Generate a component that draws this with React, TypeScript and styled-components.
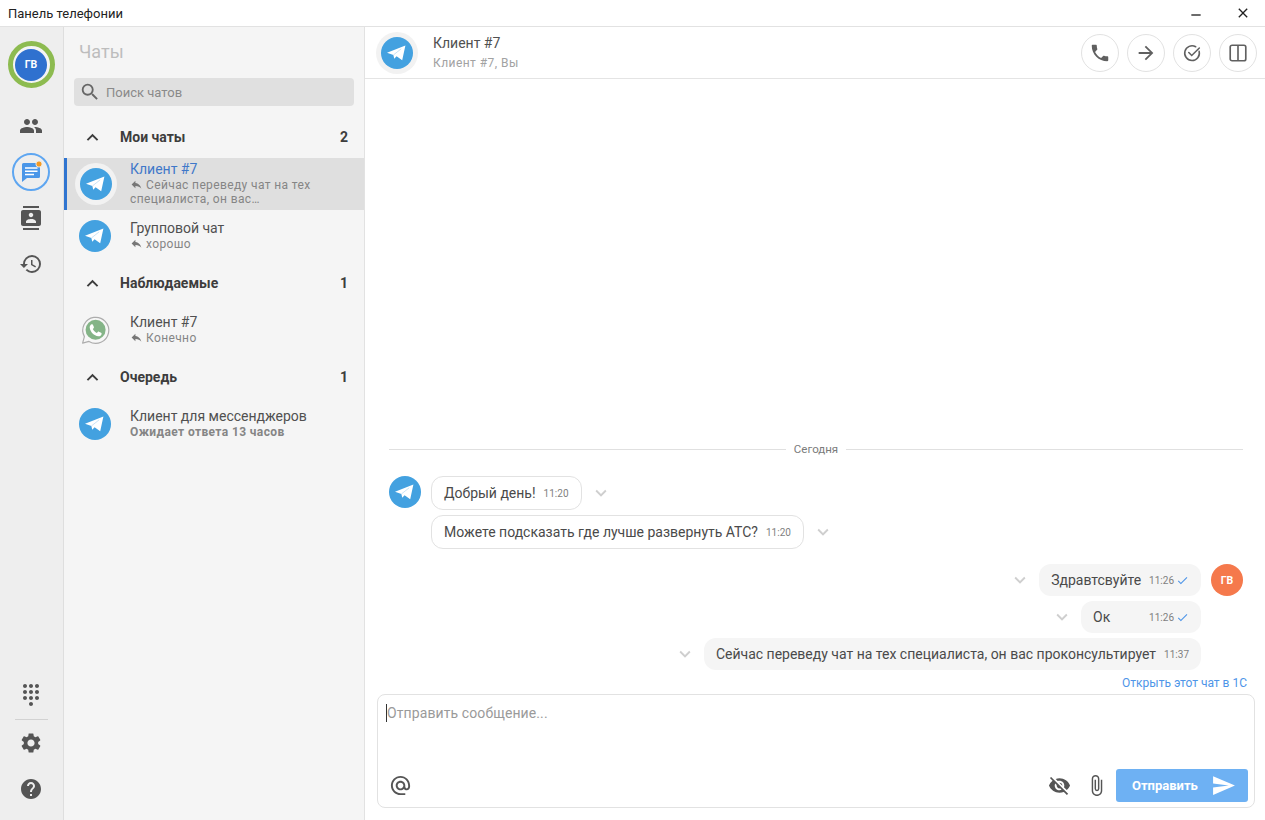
import React from "react";
import styled, { createGlobalStyle } from "styled-components";
import {
  MdPeople, MdContacts, MdRestore, MdDialpad, MdSettings, MdHelp, MdSearch, MdReply,
  MdExpandLess, MdPhone, MdArrowForward, MdVisibilityOff, MdAttachFile, MdSend,
  MdAlternateEmail, MdKeyboardArrowDown, MdCheck, MdClose, MdRemove,
} from "react-icons/md";

const Global = createGlobalStyle`
  html, body { margin: 0; padding: 0; height: 100%; background: #fff; overflow: hidden; }
  body { font-family: Roboto, "Liberation Sans", sans-serif; color: #333; }
  #root { height: 100%; }
`;

const Window = styled.div`
  width: 1265px; height: 820px; display: flex; flex-direction: column; overflow: hidden;
`;
const TitleBar = styled.header`
  height: 26px; flex: none; display: flex; align-items: center; justify-content: space-between;
  border-bottom: 1px solid #e2e2e2; padding: 0 14px 0 8px; font-size: 13px; color: #222;
`;
const WinButtons = styled.div`
  display: flex; align-items: center; gap: 31px; color: #222;
  svg { display: block; width: 16px; height: 16px; }
  svg:first-child { margin-top: 3px; }
`;
const Body = styled.div` flex: 1; display: flex; min-height: 0; `;
const Rail = styled.nav`
  width: 62px; flex: none; background: #eeeeee; border-right: 1px solid #dedede; padding-right: 1px;
  display: flex; flex-direction: column; align-items: center; padding-top: 14px; color: #555;
`;
const ProfileRing = styled.div`
  width: 47px; height: 47px; box-sizing: border-box; border-radius: 50%; border: 5px solid #8dbb50;
  background: #f4f4f4; display: flex; align-items: center; justify-content: center; margin-bottom: 19px; flex: none;
`;
const Initials = styled.div<{ $bg: string }>`
  width: 32px; height: 32px; border-radius: 50%; background: ${(p) => p.$bg}; color: #fff;
  font-size: 10.5px; font-weight: 700; display: flex; align-items: center; justify-content: center; flex: none;
`;
const RailItem = styled.div<{ $h: number }>`
  width: 38px; height: ${(p) => p.$h}px; display: flex; align-items: center; justify-content: center; flex: none;
  svg { display: block; width: 24px; height: 24px; }
`;
const ActiveCircle = styled.div`
  width: 38px; height: 38px; box-sizing: border-box; border: 2px solid #5ea6f1; border-radius: 50%;
  display: flex; align-items: center; justify-content: center; margin: 8px 0 4px; flex: none;
`;
const RailSpacer = styled.div` flex: 1; `;
const RailRule = styled.hr`
  width: 33px; border: 0; border-top: 1px solid #d2d2d2; margin: 0; flex: none;
`;
const ChatsPanel = styled.aside`
  width: 300px; flex: none; background: #f5f5f5; border-right: 1px solid #e2e2e2;
  display: flex; flex-direction: column;
`;
const PanelTitle = styled.h1`
  margin: 0; height: 51px; box-sizing: border-box; padding: 14px 0 0 15px;
  font-size: 18px; line-height: 21px; font-weight: 400; color: #bdbdbd;
`;
const Search = styled.div`
  height: 28px; margin: 0 10px; background: #e0e0e0; border-radius: 4px; display: flex; align-items: center;
  padding-left: 5px; gap: 5px; color: #8a8a8a; font-size: 13px; flex: none;
  svg { width: 22px; height: 22px; color: #666; display: block; }
`;
const Section = styled.div`
  height: 42px; flex: none; display: flex; align-items: center; padding: 0 16px 0 17px;
  font-size: 14px; font-weight: 700; color: #3d3d3d;
  svg { width: 23px; height: 23px; display: block; }
`;
const SectionName = styled.span` flex: 1; margin-left: 16px; `;
const SectionStart = styled.div` margin-top: 10px; `;
const Row = styled.div<{ $active?: boolean }>`
  height: 52px; flex: none; box-sizing: border-box; display: flex; align-items: center;
  padding-left: ${(p) => (p.$active ? 8 : 15)}px; gap: ${(p) => (p.$active ? 13 : 19)}px;
  background: ${(p) => (p.$active ? "#dfdfdf" : "transparent")};
  border-left: ${(p) => (p.$active ? "3px solid #2f74d0" : "0")};
`;
const RowText = styled.div` flex: 1; min-width: 0; padding: 0 30px 1px 0; `;
const RowName = styled.div<{ $active?: boolean }>`
  font-size: 14px; line-height: 16px; color: ${(p) => (p.$active ? "#3f78c9" : "#505050")};
`;
const RowLine = styled.div<{ $bold?: boolean }>`
  font-size: 12px; line-height: 14px; margin-top: 1px; letter-spacing: 0.38px;
  font-weight: ${(p) => (p.$bold ? 700 : 400)}; color: #858585;
  svg { width: 13px; height: 13px; vertical-align: -2px; margin-right: 3px; color: #777; }
`;
const Halo = styled.div`
  width: 42px; height: 42px; border-radius: 50%; background: #f2f2f2; flex: none;
  display: flex; align-items: center; justify-content: center;
`;
const IconDisc = styled.svg`
  width: 32px; height: 32px; display: block; flex: none;
`;
const Main = styled.main` flex: 1; min-width: 0; display: flex; flex-direction: column; background: #fff; `;
const ChatHeader = styled.div`
  height: 52px; flex: none; box-sizing: border-box; border-bottom: 1px solid #e4e4e4;
  display: flex; align-items: center; padding: 0 8px 0 11px;
`;
const HeaderText = styled.div` flex: 1; margin-left: 15px; `;
const HeaderName = styled.div` font-size: 14px; line-height: 17px; color: #505050; `;
const HeaderSub = styled.div` font-size: 12px; line-height: 15px; margin-top: 4px; color: #a2a2a2; letter-spacing: 0.45px; `;
const HeaderButtons = styled.div` display: flex; gap: 8px; `;
const RoundButton = styled.button`
  width: 38px; height: 38px; padding: 0; border-radius: 50%; border: 1px solid #e2e2e2; background: #fff;
  color: #606060; display: flex; align-items: center; justify-content: center;
  svg { width: 22px; height: 22px; display: block; }
`;
const Messages = styled.div`
  flex: 1; min-height: 0; display: flex; flex-direction: column; justify-content: flex-end; padding: 0 22px 0 24px;
`;
const DateLine = styled.div`
  display: flex; align-items: center; gap: 8px; font-size: 11.5px; color: #7b7b7b; margin-bottom: 20px;
  &::before, &::after { content: ""; flex: 1; border-top: 1px solid #e0e0e0; }
`;
const MsgRow = styled.div<{ $out?: boolean; $gap?: number }>`
  display: flex; align-items: center; justify-content: ${(p) => (p.$out ? "flex-end" : "flex-start")};
  margin-top: ${(p) => p.$gap ?? 0}px;
  padding-left: ${(p) => (p.$out ? 0 : 42)}px; padding-right: ${(p) => (p.$out ? 42 : 0)}px;
  position: relative;
`;
const MsgAvatar = styled.div<{ $out?: boolean }>`
  position: absolute; top: 0; ${(p) => (p.$out ? "right: 0;" : "left: 0;")}
`;
const Bubble = styled.div<{ $out?: boolean; $h?: number; $w?: number }>`
  box-sizing: border-box; height: ${(p) => p.$h ?? 32}px; ${(p) => (p.$w ? `width: ${p.$w}px;` : "")}
  display: flex; align-items: center; justify-content: space-between; gap: 8px; padding: 0 12px;
  border-radius: 12px; font-size: 14px; color: #4a4a4a;
  background: ${(p) => (p.$out ? "#f5f5f5" : "#fff")};
  border: ${(p) => (p.$out ? "0" : "1px solid #e2e2e2")};
`;
const Time = styled.span`
  font-size: 10px; color: #7f7f7f; white-space: nowrap; display: inline-flex; align-items: center; gap: 2px; margin-top: 1px;
  svg { width: 13px; height: 13px; color: #4e95e8; display: block; }
`;
const Caret = styled.span`
  color: #cfcfcf; display: flex; margin: 0 8px;
  svg { width: 22px; height: 22px; display: block; }
`;
const OpenLink = styled.a`
  align-self: flex-end; font-size: 12px; line-height: 14px; color: #4e95e8; margin: 6px -4px 4px 0;
`;
const Composer = styled.div`
  height: 114px; flex: none; box-sizing: border-box; margin: 0 10px 12px 12px; border: 1px solid #e2e2e2; border-radius: 8px;
  display: flex; flex-direction: column; justify-content: space-between; padding: 9px 6px 5px 8px;
`;
const Placeholder = styled.div`
  font-size: 14px; line-height: 18px; color: #9a9a9a; border-left: 1px solid #333;
  width: max-content; letter-spacing: 0.1px;
`;
const ComposerBar = styled.div` display: flex; align-items: center; color: #555; `;
const ComposerIcon = styled.span<{ $ml?: number; $mr?: number }>`
  display: flex; margin-left: ${(p) => p.$ml ?? 0}px; margin-right: ${(p) => p.$mr ?? 0}px;
  svg { width: 23px; height: 23px; display: block; }
`;
const Grow = styled.div` flex: 1; `;
const SendButton = styled.button`
  width: 132px; height: 33px; border: 0; border-radius: 3px; background: #6eb1f3; color: #fff; padding: 0 16px;
  display: flex; align-items: center; justify-content: space-between; font: 700 13px Roboto, sans-serif;
  svg { width: 25px; height: 25px; display: block; margin-right: -4px; }
`;

const Tg = () => (
  <IconDisc viewBox="0 0 32 32">
    <circle cx="16" cy="16" r="16" fill="#43a1e0" />
    <path d="M6 15.8 L24.4 8.4 L21.2 23.2 L15.6 19.2 L13.2 21.8 L12.4 18 Z" fill="#fff" />
    <path d="M12.4 18 L20.2 11.8" stroke="#bcdcf3" strokeWidth="0.8" />
  </IconDisc>
);

const Wa = () => (
  <IconDisc viewBox="0 0 32 32">
    <path d="M3.6 29.2 L5.4 22.6 A13 13 0 1 1 10 27.4 Z" fill="#f7f7f7" stroke="#adadad" strokeWidth="1.2" strokeLinejoin="round" />
    <circle cx="16.6" cy="15.8" r="10" fill="#84b487" />
    <path d="M12.6 10.2c.5 0 1 0 1.3.6l1 2.3c.1.4 0 .8-.3 1.1l-.8.9c.9 1.7 2.2 3 4 3.9l1-1.1c.3-.3.7-.4 1.1-.2l2.2 1c.5.3.6.7.5 1.2-.3 1.6-1.8 2.5-3.3 2.3-4.3-.6-8-4.2-8.6-8.5-.2-1.5.7-3 1.9-3.500z" fill="#fff" />
  </IconDisc>
);

const ChatBubbleIcon = () => (
  <svg width="26" height="26" viewBox="0 0 26 26">
    <path d="M5.5 4h15a1.5 1.5 0 0 1 1.5 1.5v12a1.5 1.5 0 0 1-1.5 1.5H9l-5 4V5.5A1.5 1.5 0 0 1 5.5 4z" fill="#4a96e8" />
    <path d="M7 9h12.5M7 12.2h12.5M7 15.4h9" stroke="#fff" strokeWidth="1.5" />
    <circle cx="21" cy="5" r="3.1" fill="#f59a23" stroke="#eee" strokeWidth="0.9" />
  </svg>
);

const PanelIcon = () => (
  <svg viewBox="0 0 24 24" fill="none" stroke="currentColor" strokeWidth="1.8">
    <rect x="3.5" y="3.5" width="17" height="17" rx="2" />
    <path d="M12 3.5v17" />
  </svg>
);

const CheckCircle = () => (
  <svg viewBox="0 0 24 24" fill="none" stroke="currentColor" strokeWidth="1.7" strokeLinecap="round">
    <path d="M19.8 10.2A8 8 0 1 1 16 5.2" />
    <path d="M8.5 11.5l3.2 3.2L20 6.5" />
  </svg>
);

const Down = () => (
  <Caret><MdKeyboardArrowDown /></Caret>
);

export default function App() {
  return (
    <Window>
      <Global />
      <TitleBar>
        <span>Панель телефонии</span>
        <WinButtons><MdRemove /><MdClose /></WinButtons>
      </TitleBar>
      <Body>
        <Rail>
          <ProfileRing><Initials $bg="#2f71cf">ГВ</Initials></ProfileRing>
          <RailItem $h={38}><MdPeople /></RailItem>
          <ActiveCircle><ChatBubbleIcon /></ActiveCircle>
          <RailItem $h={46}><MdContacts /></RailItem>
          <RailItem $h={46}><MdRestore /></RailItem>
          <RailSpacer />
          <RailItem $h={48}><MdDialpad /></RailItem>
          <RailRule />
          <RailItem $h={46}><MdSettings /></RailItem>
          <RailItem $h={46}><MdHelp /></RailItem>
          <RailItem $h={8} />
        </Rail>
        <ChatsPanel>
          <PanelTitle>Чаты</PanelTitle>
          <Search><MdSearch /> Поиск чатов</Search>
          <SectionStart />
          <Section><MdExpandLess /><SectionName>Мои чаты</SectionName>2</Section>
          <Row $active>
            <Halo><Tg /></Halo>
            <RowText>
              <RowName $active>Клиент #7</RowName>
              <RowLine><MdReply />Сейчас переведу чат на тех специалиста, он вас…</RowLine>
            </RowText>
          </Row>
          <Row>
            <Tg />
            <RowText>
              <RowName>Групповой чат</RowName>
              <RowLine><MdReply />хорошо</RowLine>
            </RowText>
          </Row>
          <Section><MdExpandLess /><SectionName>Наблюдаемые</SectionName>1</Section>
          <Row>
            <Wa />
            <RowText>
              <RowName>Клиент #7</RowName>
              <RowLine><MdReply />Конечно</RowLine>
            </RowText>
          </Row>
          <Section><MdExpandLess /><SectionName>Очередь</SectionName>1</Section>
          <Row>
            <Tg />
            <RowText>
              <RowName>Клиент для мессенджеров</RowName>
              <RowLine $bold>Ожидает ответа 13 часов</RowLine>
            </RowText>
          </Row>
        </ChatsPanel>
        <Main>
          <ChatHeader>
            <Halo><Tg /></Halo>
            <HeaderText>
              <HeaderName>Клиент #7</HeaderName>
              <HeaderSub>Клиент #7, Вы</HeaderSub>
            </HeaderText>
            <HeaderButtons>
              <RoundButton><MdPhone /></RoundButton>
              <RoundButton><MdArrowForward /></RoundButton>
              <RoundButton><CheckCircle /></RoundButton>
              <RoundButton><PanelIcon /></RoundButton>
            </HeaderButtons>
          </ChatHeader>
          <Messages>
            <DateLine>Сегодня</DateLine>
            <MsgRow>
              <MsgAvatar><Tg /></MsgAvatar>
              <Bubble $h={34}>Добрый день! <Time>11:20</Time></Bubble>
              <Down />
            </MsgRow>
            <MsgRow $gap={5}>
              <Bubble $h={34}>Можете подсказать где лучше развернуть АТС? <Time>11:20</Time></Bubble>
              <Down />
            </MsgRow>
            <MsgRow $out $gap={15}>
              <MsgAvatar $out><Initials $bg="#f5794c">ГВ</Initials></MsgAvatar>
              <Down />
              <Bubble $out>Здравтсвуйте <Time>11:26 <MdCheck /></Time></Bubble>
            </MsgRow>
            <MsgRow $out $gap={5}>
              <Down />
              <Bubble $out $w={120}>Ок <Time>11:26 <MdCheck /></Time></Bubble>
            </MsgRow>
            <MsgRow $out $gap={5}>
              <Down />
              <Bubble $out>Сейчас переведу чат на тех специалиста, он вас проконсультирует <Time>11:37</Time></Bubble>
            </MsgRow>
            <OpenLink>Открыть этот чат в 1С</OpenLink>
          </Messages>
          <Composer>
            <Placeholder>Отправить сообщение...</Placeholder>
            <ComposerBar>
              <ComposerIcon $ml={3}><MdAlternateEmail /></ComposerIcon>
              <Grow />
              <ComposerIcon $mr={14}><MdVisibilityOff /></ComposerIcon>
              <ComposerIcon $mr={8}><MdAttachFile /></ComposerIcon>
              <SendButton>Отправить <MdSend /></SendButton>
            </ComposerBar>
          </Composer>
        </Main>
      </Body>
    </Window>
  );
}
